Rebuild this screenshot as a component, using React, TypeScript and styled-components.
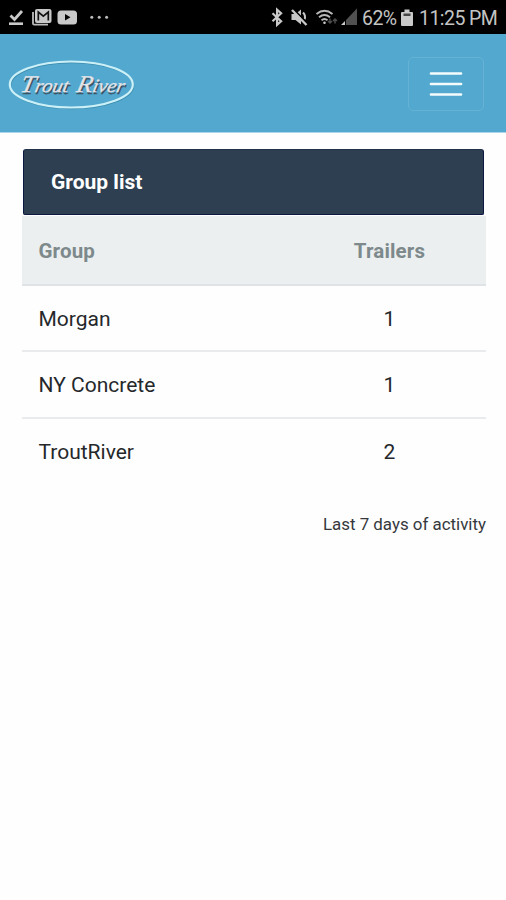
import React from "react";
import styled, { createGlobalStyle } from "styled-components";

const GlobalStyle = createGlobalStyle`
  * { box-sizing: border-box; }
  body { margin: 0; background: #fefefe; font-family: Roboto, sans-serif; color: #212529; }
`;

const Screen = styled.div`
  width: 506px;
  height: 900px;
  overflow: hidden;
  background: #fefefe;
`;

const StatusBar = styled.div`
  height: 34px;
  padding: 0 9px 0 8px;
  background: #000;
  color: #c4c4c4;
  display: flex;
  align-items: center;
  justify-content: space-between;
`;

const Notifications = styled.svg`
  display: block;
  width: 104px;
  height: 34px;
`;

const SystemStatus = styled.div`
  display: flex;
  align-items: center;
  height: 34px;
`;

const StatusIcons = styled.svg`
  display: block;
  width: 92px;
  height: 34px;
`;

const BatteryIcon = styled.svg`
  display: block;
  width: 12px;
  height: 34px;
  margin: 0 6px 0 5px;
`;

const StatusText = styled.span<{ $width: number }>`
  width: ${(p) => p.$width}px;
  font-size: 19.5px;
  letter-spacing: -0.55px;
  line-height: 32px;
  padding-top: 4px;
  white-space: nowrap;
`;

const NavBar = styled.header`
  height: 99px;
  padding: 0 22px 0 8px;
  background: #52a8ce;
  border-bottom: 1px solid #a9d6e8;
  display: flex;
  align-items: center;
  justify-content: space-between;
`;

const Logo = styled.svg`
  display: block;
  width: 128px;
  height: 52px;
  margin-top: 4px;
`;

const MenuButton = styled.button`
  width: 76px;
  height: 54px;
  margin-top: 2px;
  padding: 0;
  border: 1px solid #65b2d5;
  border-radius: 5px;
  background: transparent;
  display: flex;
  align-items: center;
  justify-content: center;
`;

const Content = styled.main`
  padding: 16px 20px 0 22px;
`;

const Title = styled.h1`
  margin: 0 2px 0 1px;
  height: 66px;
  padding-left: 27px;
  border: 1px solid #0b1942;
  border-top-color: #22324a;
  border-radius: 3px 3px 2px 2px;
  background: #2e3f51;
  color: #fff;
  font-size: 21px;
  font-weight: 700;
  line-height: 65px;
`;

const Table = styled.div`
  margin-top: 1px;
`;

const Row = styled.div<{ $head?: boolean; $last?: boolean }>`
  display: grid;
  grid-template-columns: 271px 193px;
  align-items: center;
  height: ${(p) => (p.$head ? 70 : 66.4)}px;
  padding-top: ${(p) => (p.$last ? 0 : p.$head ? 2 : 1)}px;
  background: ${(p) => (p.$head ? "#ebeff0" : "transparent")};
  color: ${(p) => (p.$head ? "#7d898b" : "#25282b")};
  font-weight: ${(p) => (p.$head ? 700 : 400)};
  font-size: ${(p) => (p.$head ? 20.5 : 21)}px;
  letter-spacing: ${(p) => (p.$head ? 0.15 : 0)}px;
  border-bottom: ${(p) => (p.$last ? "0" : p.$head ? "2px solid #dfe3e5" : "2px solid #e9ebec")};
`;

const Cell = styled.div<{ $center?: boolean }>`
  padding-left: ${(p) => (p.$center ? 0 : 16.5)}px;
  text-align: ${(p) => (p.$center ? "center" : "left")};
`;

const Footnote = styled.p`
  margin: 27px 0 0;
  font-size: 16.9px;
  line-height: 24px;
  text-align: right;
  color: #35393d;
`;

const Wordmark = ({ x, y, fill }: { x: number; y: number; fill: string }) => (
  <g
    transform={`translate(${x} ${y}) skewX(-12)`}
    fontFamily="'Liberation Serif', serif"
    fontStyle="italic"
    fontSize="19"
    fill={fill}
    stroke={fill}
    strokeWidth="0.3"
  >
    <text x="0" y="0" textLength="48" lengthAdjust="spacingAndGlyphs">
      <tspan fontSize="24">T</tspan>rout
    </text>
    <text x="56" y="0" textLength="48" lengthAdjust="spacingAndGlyphs">
      <tspan fontSize="24">R</tspan>iver
    </text>
  </g>
);

const groups = [
  { name: "Morgan", trailers: 1 },
  { name: "NY Concrete", trailers: 1 },
  { name: "TroutRiver", trailers: 2 },
];

export default function App() {
  return (
    <>
      <GlobalStyle />
      <Screen>
        <StatusBar>
          <Notifications viewBox="8 0 104 34" aria-hidden="true">
            <path d="M10.5 15.5l4 4L22 11" fill="none" stroke="#c9c9c9" strokeWidth="2.8" />
            <path d="M9 23.7h14" stroke="#c9c9c9" strokeWidth="2.6" />
            <path d="M33 12v11.5q0 1.2 1.2 1.2H48" fill="none" stroke="#bdbdbd" strokeWidth="1.8" />
            <rect x="35" y="9" width="16.5" height="14" rx="2" fill="#c9c9c9" />
            <path d="M38.3 20.5V12l5 4.2 5-4.2v8.5" fill="none" stroke="#111" strokeWidth="1.7" />
            <rect x="57.5" y="10.5" width="19.5" height="14" rx="3.5" fill="#c9c9c9" />
            <path d="M65 14v6.5l5.5-3.2z" fill="#050505" />
            <circle cx="91.8" cy="17.2" r="1.5" fill="#bbb" />
            <circle cx="99.2" cy="17.2" r="1.5" fill="#bbb" />
            <circle cx="106.6" cy="17.2" r="1.5" fill="#bbb" />
          </Notifications>
          <SystemStatus>
            <StatusIcons viewBox="269 0 92 34" aria-hidden="true">
              <path d="M271.5 13.2l8.6 8-4 3.600V9.600l4 3.600-8.600 8" fill="none" stroke="#c9c9c9" strokeWidth="2.200" />
              <path d="M290.500 14h4l5.500-4.500v15l-5.500-4.500h-4z" fill="#c9c9c9" />
              <path d="M302 12.500q3 3 1.500 7" fill="none" stroke="#c9c9c9" strokeWidth="2" />
              <path d="M292.500 9.500l14 14" stroke="#000" strokeWidth="2" />
              <path d="M291 10l14.500 15" stroke="#c9c9c9" strokeWidth="2.400" />
              <g fill="none" stroke="#b8b8b8" strokeWidth="1.900">
                <path d="M315.500 14q8-6.500 16 0" />
                <path d="M318 17.300q5.500-4.500 11 0" />
                <path d="M320.500 20.300q3-2.500 6 0" />
              </g>
              <circle cx="323.500" cy="22.700" r="1.300" fill="#c9c9c9" />
              <path d="M329 18.500v4.500m-2-2l2 2 2-2M334 23.500V19m-2 2l2-2 2 2" fill="none" stroke="#4b4b4b" strokeWidth="1.500" />
              <path d="M345 25v-5l11-11.500V25z" fill="#505050" />
              <path d="M340 25l4-4v4z" fill="#c9c9c9" />
            </StatusIcons>
            <StatusText $width={34}>62%</StatusText>
            <BatteryIcon viewBox="0 0 12 34" aria-hidden="true">
              <path d="M3.500 9.500h5V12H11q1 0 1 1v12q0 1-1 1H1q-1 0-1-1V13q0-1 1-1h2.500z" fill="#c9c9c9" />
              <path d="M2.500 13.500h7V16h-7z" fill="#444" />
            </BatteryIcon>
            <StatusText $width={78}>11:25 PM</StatusText>
          </SystemStatus>
        </StatusBar>

        <NavBar>
          <Logo viewBox="8 59 128 52" role="img" aria-label="Trout River">
            <ellipse cx="72" cy="85.500" rx="61.500" ry="23" fill="none" stroke="#3b8cae" strokeWidth="1.500" />
            <ellipse cx="71.300" cy="84.500" rx="61.500" ry="23" fill="none" stroke="#cbf0f7" strokeWidth="2.200" />
            <Wordmark x={20.5} y={93.5} fill="#3b5263" />
            <Wordmark x={19.5} y={92.3} fill="#e4e3e8" />
          </Logo>
          <MenuButton aria-label="Menu">
            <svg width="34" height="28" viewBox="0 0 34 28">
              <path d="M2 3.500h30M2 14h30M2 24.500h30" stroke="#f4fbfd" strokeWidth="2.700" strokeLinecap="round" />
            </svg>
          </MenuButton>
        </NavBar>

        <Content>
          <Title>Group list</Title>
          <Table role="table">
            <Row $head role="row">
              <Cell role="columnheader">Group</Cell>
              <Cell $center role="columnheader">Trailers</Cell>
            </Row>
            {groups.map((g, i) => (
              <Row key={g.name} role="row" $last={i === groups.length - 1}>
                <Cell role="cell">{g.name}</Cell>
                <Cell $center role="cell">{g.trailers}</Cell>
              </Row>
            ))}
          </Table>
          <Footnote>Last 7 days of activity</Footnote>
        </Content>
      </Screen>
    </>
  );
}
